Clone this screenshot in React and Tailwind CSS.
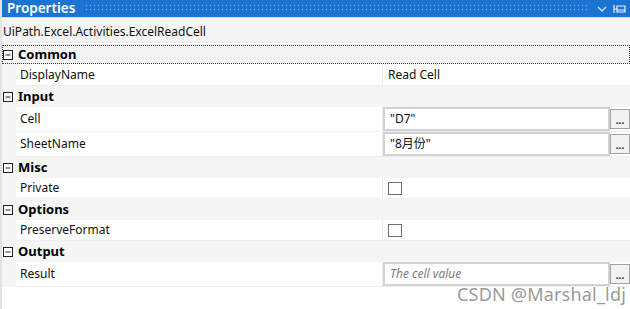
const font = { fontFamily: '"Noto Sans", "Noto Sans CJK SC", sans-serif' }

const Minus = () => (
  <svg width="10" height="10" viewBox="0 0 10 10" className="shrink-0">
    <rect x="0.5" y="0.5" width="9" height="9" fill="white" stroke="#222" />
    <line x1="2.5" y1="5" x2="7.5" y2="5" stroke="#222" />
  </svg>
)

const Category = ({ name, focus, h = 'h-[21px]' }) => (
  <div className={`${h} bg-[#f4f5f4] flex items-center`}>
    <div
      className={`flex items-center gap-[5px] h-full w-full ${
        focus ? 'border border-dotted border-[#333] pl-0' : 'pl-[1px]'
      }`}
    >
      <Minus />
      <span className="font-bold text-[13px] text-black">{name}</span>
    </div>
  </div>
)

const Row = ({ label, h = 'h-[21px]', children }) => (
  <div className={`${h} flex bg-[#f4f5f4]`}>
    <div className="w-[14px] shrink-0" />
    <div className="flex flex-1 bg-white border-b border-[#eef0ee]">
      <div className="w-[367px] shrink-0 flex items-center pl-[4px] text-[12px] text-[#111] border-r border-[#eceeec]">
        {label}
      </div>
      <div className="flex-1 flex items-center">{children}</div>
    </div>
  </div>
)

const Field = ({ value, placeholder }) => (
  <div className="flex items-center w-full">
    <div className="h-[24px] flex-1 border-2 border-[#d2d2d6] bg-white flex items-center pl-[5px] text-[12px]">
      {value ? (
        <span className="text-[#111]">{value}</span>
      ) : (
        <span className="italic text-[#7a7a86]">{placeholder}</span>
      )}
    </div>
    <div className="w-[20px] h-[20px] border border-[#a2a2a2] bg-[#f2f2f2] flex items-end justify-center pb-[3px] text-[10px] leading-none font-bold text-[#222]">
      ...
    </div>
  </div>
)

const Check = () => <div className="ml-[5px] w-[14px] h-[13px] border border-[#6e6e6e] bg-white" />

export default function App() {
  return (
    <div style={font} className="w-[630px] h-[309px] bg-white relative overflow-hidden border-l-2 border-[#e2e4e2]">
      {/* title */}
      <div className="h-[17px] bg-[#1c74d2] flex items-center">
        <span className="pl-[5px] text-[13.5px] font-semibold text-white leading-none">Properties</span>
        <svg className="ml-[10px] flex-1" height="10">
          <defs>
            <pattern id="dots" width="4" height="4" patternUnits="userSpaceOnUse">
              <rect x="1" y="1" width="1" height="1" fill="#8fb9ec" />
            </pattern>
          </defs>
          <rect x="0" y="0" width="100%" height="8" fill="url(#dots)" />
        </svg>
        <svg width="14" height="14" viewBox="0 0 14 14" className="ml-[6px]">
          <path d="M3 5 L7 9 L11 5" fill="none" stroke="#cfe1f7" strokeWidth="1.4" />
        </svg>
        <svg width="16" height="14" viewBox="0 0 16 14" className="ml-[3px] mr-[2px]">
          <path d="M2 3 V11 M2 7 H5 M5 4 H13 V10 H5 Z M5 8 H13" fill="none" stroke="#e6f0fb" strokeWidth="1.2" />
        </svg>
      </div>
      <div className="h-px bg-[#dcdedc]" />
      <div className="h-[27px] bg-[#f4f5f4] flex items-center pl-[1px] text-[12px] text-[#111]">
        UiPath.Excel.Activities.ExcelReadCell
      </div>

      <Category name="Common" focus h="h-[19px]" />
      <Row label="DisplayName" h="h-[22px]">
        <span className="pl-[5px] text-[12px] text-[#111]">Read Cell</span>
      </Row>
      <Category name="Input" />
      <Row label="Cell" h="h-[25px]">
        <Field value={'"D7"'} />
      </Row>
      <Row label="SheetName" h="h-[25px]">
        <Field value={'"8月份"'} />
      </Row>
      <Category name="Misc" />
      <Row label="Private">
        <Check />
      </Row>
      <Category name="Options" />
      <Row label="PreserveFormat">
        <Check />
      </Row>
      <Category name="Output" />
      <Row label="Result" h="h-[25px]">
        <Field placeholder="The cell value" />
      </Row>

      <div className="absolute left-[455px] top-[284px] text-[18px] leading-[20px] text-[#8c8c8c]/90 tracking-[0.2px]">
        CSDN @Marshal_ldj
      </div>
    </div>
  )
}
